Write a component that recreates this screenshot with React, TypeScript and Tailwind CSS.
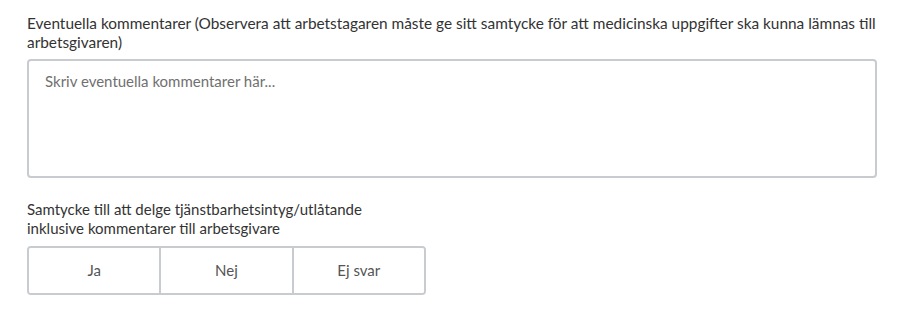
import React, { useState } from "react";

const options = ["Ja", "Nej", "Ej svar"];

const App: React.FC = () => {
  const [comment, setComment] = useState("");
  const [consent, setConsent] = useState<string | null>(null);

  return (
    <div className="bg-white w-[906px] h-[322px] pl-[27px] pt-[14px] font-['Lato','Liberation_Sans',sans-serif] text-[#333]">
      <label className="block w-[860px] text-[15.4px] leading-[19px]">
        Eventuella kommentarer (Observera att arbetstagaren måste ge sitt samtycke för att medicinska uppgifter ska kunna lämnas till arbetsgivaren)
      </label>
      <textarea
        value={comment}
        onChange={(e) => setComment(e.target.value)}
        placeholder="Skriv eventuella kommentarer här..."
        className="mt-[7px] block w-[850px] h-[119px] resize-none border-2 border-[#c8cbd0] rounded-[4px] px-[16px] pt-[11px] text-[15px] leading-[19px] placeholder:text-[#707070] outline-none"
      />
      <p className="mt-[22px] text-[15px] leading-[19px]">
        Samtycke till att delge tjänstbarhetsintyg/utlåtande
        <br />
        inklusive kommentarer till arbetsgivare
      </p>
      <div className="mt-[8px] flex w-[399px] h-[49px] border-2 border-[#c8cbd0] rounded-[4px] overflow-hidden">
        {options.map((o, i) => (
          <button
            key={o}
            onClick={() => setConsent(o)}
            className={`flex-1 text-[15px] text-[#555] ${
              i > 0 ? "border-l-2 border-[#c8cbd0]" : ""
            } ${consent === o ? "bg-[#e8eef5]" : "bg-white"}`}
          >
            {o}
          </button>
        ))}
      </div>
    </div>
  );
};

export default App;
